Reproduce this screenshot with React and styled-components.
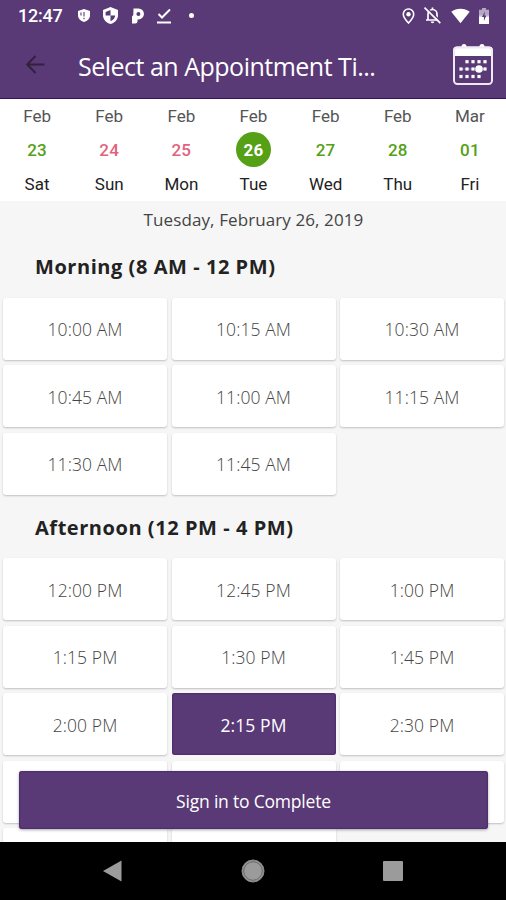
import React from "react";
import styled, { createGlobalStyle, css, } from "styled-components";

// --------------------------------------------------

const colors = {
	purple: "#593976",
	purpleDark: "#36115c",
	green: "#55a015",
	red: "#e2627c",
	bg: "#f6f6f6",
	nav: "#9b9b9b",
};

const fonts = {
	body: "\"Open Sans\", \"Noto Sans\", sans-serif",
	system: "Roboto, \"Liberation Sans\", sans-serif",
};

const GlobalStyle = createGlobalStyle`
	* {
		box-sizing: border-box;
	}

	body {
		margin: 0;
		background: ${ colors.bg };
	}
`;

// --------------------------------------------------

const Screen = styled.div`
	display: flex;
	flex-direction: column;
	width: 506px;
	height: 900px;
	overflow: hidden;
	background: ${ colors.bg };
	font-family: ${ fonts.body };
	color: #222;
`;

const Header = styled.header`
	flex: none;
	height: 99px;
	background: ${ colors.purple };
	border-bottom: 1px solid ${ colors.purpleDark };
	color: white;
`;

const StatusBar = styled.div`
	display: flex;
	align-items: center;
	justify-content: space-between;
	height: 31px;
	padding: 0 17px 0 18px;
`;

const StatusGroup = styled.div`
	display: flex;
	align-items: center;
	gap: ${ p => p.gap };
`;

const Clock = styled.span`
	margin-right: 2px;
	font: 500 18px/31px ${ fonts.system };
	letter-spacing: -0.25px;
`;

const Glyph = styled.svg`
	display: block;
	flex: none;
	width: ${ p => p.w }px;
	height: ${ p => p.h }px;
	overflow: visible;
`;

const AppBar = styled.div`
	display: flex;
	align-items: center;
	height: 67px;
	padding: 0 13px 0 26px;
`;

const Title = styled.h1`
	flex: 1;
	margin: 0 0 0 33px;
	font-size: 25px;
	font-weight: 400;
	line-height: 40px;
	letter-spacing: -0.5px;
	white-space: nowrap;
	padding-top: 2px;
`;

// --------------------------------------------------

const DateStrip = styled.div`
	flex: none;
	display: grid;
	grid-template-columns: repeat(7, 1fr);
	height: 102px;
	padding-left: 1px;
	background: white;
	font-family: ${ fonts.system };
	font-size: 17px;
	text-align: center;
`;

const DateCell = styled.div`
	display: flex;
	flex-direction: column;
	align-items: center;
`;

const Month = styled.span`
	height: 33px;
	line-height: 35px;
	color: #555;
`;

const Day = styled.span`
	width: 35px;
	height: 35px;
	border-radius: 50%;
	line-height: 36px;
	font-weight: 500;
	letter-spacing: 0.2px;
	color: ${ p => (p.closed ? colors.red : colors.green) };
	${ p =>
	p.selected
		? css`
		background: ${ colors.green };
		color: white;
		font-weight: 700;
	`
		: "" };
`;

const Weekday = styled.span`
	line-height: 34px;
	color: #222;
`;

const FullDate = styled.div`
	flex: none;
	height: 39px;
	padding-left: 1px;
	font-size: 17px;
	line-height: 38px;
	text-align: center;
	letter-spacing: 0.1px;
	color: #444;
`;

// --------------------------------------------------

const Schedule = styled.main`
	flex: none;
	height: 602px;
	overflow: hidden;
`;

const SectionTitle = styled.h2`
	margin: 0;
	padding-left: 35px;
	height: ${ p => p.h }px;
	font-size: 20px;
	font-weight: 700;
	line-height: ${ p => p.lh }px;
	letter-spacing: 0.55px;
`;

const SlotGrid = styled.div`
	display: grid;
	grid-template-columns: repeat(3, 1fr);
	grid-auto-rows: 62px;
	gap: 5.5px 4.5px;
	padding: 0 2px 0 3px;
`;

const Slot = styled.div`
	display: flex;
	align-items: center;
	justify-content: center;
	padding-top: 1px;
	border-radius: 3px;
	background: white;
	box-shadow: 0 1px 2px rgba(0, 0, 0, 0.22);
	font-size: 17.5px;
	font-weight: 300;
	letter-spacing: 0.1px;
	color: #444;
	${ p =>
	p.selected
		? css`
		background: ${ colors.purple };
		box-shadow: inset 0 0 2px ${ colors.purpleDark };
		color: white;
		font-weight: 400;
	`
		: "" };
`;

const Footer = styled.div`
	flex: none;
	display: flex;
	height: 58px;
	margin: -71px 18px 13px 19px;
	position: relative;
`;

const SubmitButton = styled.button`
	flex: 1;
	padding: 1px 0 0;
	border: 0;
	border-radius: 3px;
	background: ${ colors.purple };
	box-shadow: inset 0 0 2px ${ colors.purpleDark }, 0 1px 3px rgba(0, 0, 0, 0.35);
	color: white;
	font: 400 17.5px ${ fonts.body };
	letter-spacing: -0.2px;
`;

const NavBar = styled.nav`
	flex: none;
	display: grid;
	grid-template-columns: 112px 1fr 112px;
	align-items: center;
	justify-items: center;
	height: 58px;
	padding: 0 57px 0 56px;
	background: black;
`;

// --------------------------------------------------

const ShieldAlert = () => (
	<Glyph w = { 12 } h = { 13 } viewBox = "0 0 12 13">
		<path d = "M6 0 12 2v4.500c0 3-2.500 5.300-6 6.500C2.500 11.800 0 9.500 0 6.500V2z" fill = "white" />
		<path d = "M6 3v4.500M6 8.700v1.500M3 3.500v3" stroke = { colors.purple } strokeWidth = "1.100" />
	</Glyph>
);

const Shield = () => (
	<Glyph w = { 15 } h = { 17 } viewBox = "0 0 15 17">
		<path d = "M7.500 0 15 3v5c0 4.500-3 7.700-7.500 9C3 15.700 0 12.500 0 8V3z" fill = "white" />
		<path d = "M7.500 3v5.500H2.600V5zM7.500 8.500h4.700c-.4 2.700-2 4.700-4.700 5.700z" fill = { colors.purple } />
	</Glyph>
);

const Parking = () => (
	<Glyph w = { 12 } h = { 16 } viewBox = "0 0 12 16">
		<path
			fill = "white"
			fillRule = "evenodd"
			d = "M1.500 .5H6.500a5.400 5.400 0 0 1 0 10.900H5.500V13.500A2.200 2.200 0 0 1 3.300 15.500H0V8.500L1.300 7zM6.400 4A2 2 0 1 0 6.400 8A2 2 0 1 0 6.400 4z"
		/>
	</Glyph>
);

const CheckUnderline = () => (
	<Glyph w = { 14 } h = { 16 } viewBox = "0 0 14 16">
		<path d = "M1.500 6 5 9.500 13 1.500M0 14.500h14" fill = "none" stroke = "white" strokeWidth = "2" />
	</Glyph>
);

const Dot = styled.i`
	width: 5px;
	height: 5px;
	margin-left: 4px;
	border-radius: 50%;
	background: white;
`;

const Pin = () => (
	<Glyph w = { 13 } h = { 16 } viewBox = "0 0 13 16">
		<path
			d = "M6.500 1a5 5 0 0 0-5.200 5.200C1.300 9.500 6.500 15 6.500 15s5.200-5.500 5.200-8.800A5 5 0 0 0 6.500 1z"
			fill = "none"
			stroke = "white"
			strokeWidth = "1.600"
		/>
		<circle cx = "6.500" cy = "6.300" r = "2.200" fill = "white" />
	</Glyph>
);

const BellOff = () => (
	<Glyph w = { 17 } h = { 17 } viewBox = "0 0 17 17">
		<path
			d = "M2 13h13M4 12.500V7a4.500 4.500 0 0 1 9 0v5.500M8.500 2.500V.5"
			fill = "none"
			stroke = "white"
			strokeWidth = "1.700"
		/>
		<path d = "M6.700 14.500h3.600a1.800 1.800 0 0 1-3.600 0z" fill = "white" />
		<path d = "M1.500-.3 17.300 15" stroke = { colors.purple } strokeWidth = "1.500" />
		<path d = "M.5.700 16.300 16.200" stroke = "white" strokeWidth = "1.700" />
	</Glyph>
);

const Wifi = () => (
	<Glyph w = { 19 } h = { 16 } viewBox = "0 0 20 16">
		<path d = "M10 15.500.3 3.500C3 1.400 6.300.3 10 .3s7 1.100 9.700 3.200z" fill = "white" />
	</Glyph>
);

const Battery = () => (
	<Glyph w = { 10 } h = { 16 } viewBox = "0 0 10 16">
		<path d = "M3 0h4v1.700h3V8H0V1.700h3z" fill = "#b5a6c3" />
		<path d = "M0 9h10v7H0z" fill = "white" />
		<path d = "M0 7.500h10V9H0z" fill = "#dcd4e3" />
		<path d = "M5.800 3.500 3 9H4.900v4L7.300 7.500H5.500z" fill = { colors.purple } />
	</Glyph>
);

const BackArrow = () => (
	<Glyph w = { 19 } h = { 19 } viewBox = "0 0 19 19">
		<path
			d = "M18.500 9.500H1.500M9.500 1 1.200 9.500 9.500 18"
			fill = "none"
			stroke = "#32203f"
			strokeWidth = "2"
		/>
	</Glyph>
);

const calendarDots = [
	[ 14, 17.7, ], [ 20, 17.7, ], [ 26, 17.7, ], [ 32, 17.7, ],
	[ 8, 25, ], [ 14, 25, ], [ 20, 25, ], [ 32, 25, ],
	[ 8, 32.5, ], [ 14, 32.5, ], [ 20, 32.5, ], [ 26, 32.5, ],
];

const Calendar = () => (
	<Glyph w = { 40 } h = { 42 } viewBox = "0 0 40 42">
		<path d = "M0 12V6.500a4 4 0 0 1 4-4h4.500a2.500 2.500 0 0 1 5 0h13a2.500 2.500 0 0 1 5 0H36a4 4 0 0 1 4 4V12z" fill = "white" />
		<rect x = "1" y = "3.500" width = "38" height = "36.500" rx = "3.500" fill = "none" stroke = "#efe9f4" strokeWidth = "2" />
		{calendarDots.map(([ x, y, ]) => (
			<rect key = { `${ x }/${ y }` } x = { x - 1.6 } y = { y - 1.6 } width = "3.200" height = "3.200" fill = "white" />
		))}
		<path d = "M7 25h26" stroke = "white" strokeOpacity = "0.3" />
		<circle cx = "26" cy = "25" r = "3.800" fill = "white" />
	</Glyph>
);

const NavBack = () => (
	<Glyph w = { 20 } h = { 22 } viewBox = "0 0 20 22">
		<path d = "M1 11 19.500 .5v21z" fill = { colors.nav } />
	</Glyph>
);

const NavHome = () => (
	<Glyph w = { 24 } h = { 24 } viewBox = "0 0 24 24">
		<circle cx = "12" cy = "12" r = "11" fill = { colors.nav } stroke = "#8a8a8a" strokeWidth = "1" />
		<circle cx = "12" cy = "12" r = "9.300" fill = "none" stroke = "#666" strokeWidth = "1" />
	</Glyph>
);

const NavRecent = styled.div`
	width: 20px;
	height: 20px;
	border-radius: 1px;
	background: ${ colors.nav };
`;

// --------------------------------------------------

const dates = [
	{ month: "Feb", day: "23", weekday: "Sat", },
	{ month: "Feb", day: "24", weekday: "Sun", closed: true, },
	{ month: "Feb", day: "25", weekday: "Mon", closed: true, },
	{ month: "Feb", day: "26", weekday: "Tue", selected: true, },
	{ month: "Feb", day: "27", weekday: "Wed", },
	{ month: "Feb", day: "28", weekday: "Thu", },
	{ month: "Mar", day: "01", weekday: "Fri", },
];

const morning = [
	"10:00 AM", "10:15 AM", "10:30 AM",
	"10:45 AM", "11:00 AM", "11:15 AM",
	"11:30 AM", "11:45 AM",
];

// the last five sit behind the footer button, so they carry no label
const afternoon = [
	"12:00 PM", "12:45 PM", "1:00 PM",
	"1:15 PM", "1:30 PM", "1:45 PM",
	"2:00 PM", "2:15 PM", "2:30 PM",
	"", "", "",
	"", "",
];

const Slots = ({ times, selected, }) => (
	<SlotGrid>
		{times.map((time, i) => (
			<Slot key = { i } selected = { !!time && time === selected }>
				{time}
			</Slot>
		))}
	</SlotGrid>
);

const App = () => (
	<Screen>
		<GlobalStyle />

		<Header>
			<StatusBar>
				<StatusGroup gap = "13.5px">
					<Clock>12:47</Clock>
					<ShieldAlert />
					<Shield />
					<Parking />
					<CheckUnderline />
					<Dot />
				</StatusGroup>
				<StatusGroup gap = "9.500px">
					<Pin />
					<BellOff />
					<Wifi />
					<Battery />
				</StatusGroup>
			</StatusBar>

			<AppBar>
				<BackArrow />
				<Title>Select an Appointment Ti...</Title>
				<Calendar />
			</AppBar>
		</Header>

		<DateStrip>
			{dates.map(({ month, day, weekday, closed, selected, }) => (
				<DateCell key = { day }>
					<Month>{month}</Month>
					<Day closed = { closed } selected = { selected }>{day}</Day>
					<Weekday>{weekday}</Weekday>
				</DateCell>
			))}
		</DateStrip>

		<FullDate>Tuesday, February 26, 2019</FullDate>

		<Schedule>
			<SectionTitle h = { 57.5 } lh = { 53 }>Morning (8 AM - 12 PM)</SectionTitle>
			<Slots times = { morning } />
			<SectionTitle h = { 63.5 } lh = { 66 }>Afternoon (12 PM - 4 PM)</SectionTitle>
			<Slots times = { afternoon } selected = "2:15 PM" />
		</Schedule>

		<Footer>
			<SubmitButton>Sign in to Complete</SubmitButton>
		</Footer>

		<NavBar>
			<NavBack />
			<NavHome />
			<NavRecent />
		</NavBar>
	</Screen>
);

export default App;
